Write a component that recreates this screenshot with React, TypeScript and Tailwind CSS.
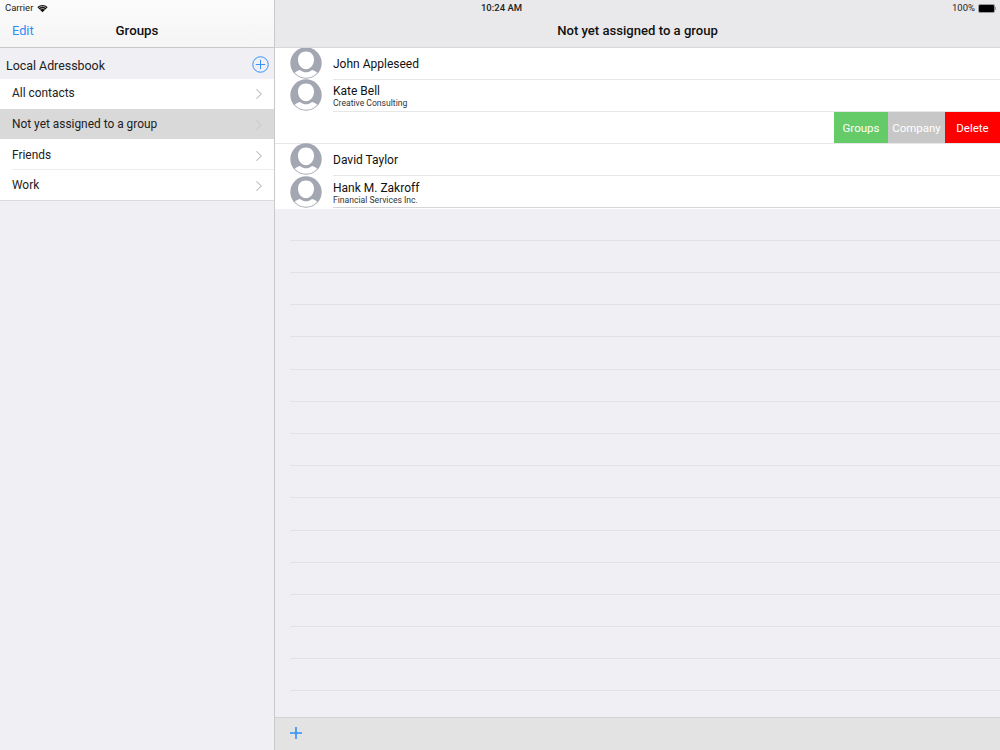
import { ChevronRight } from 'lucide-react';

const GROUPS = [
  { name: 'All contacts', h: 'h-[30px] pt-px', sep: false },
  { name: 'Not yet assigned to a group', h: 'h-[30.5px] pt-[2px]', selected: true },
  { name: 'Friends', h: 'h-[30.5px] pt-[3px]', sep: true },
  { name: 'Work', h: 'h-[30.5px] pt-[3px]' },
];

const Avatar = () => (
  <svg viewBox="0 0 32 32" className="-mt-[2px] h-8 w-8 shrink-0">
    <defs>
      <clipPath id="avatar-clip">
        <circle cx="16" cy="16" r="14.7" />
      </clipPath>
    </defs>
    <circle cx="16" cy="16" r="15.7" fill="#a3a7b2" />
    <g clipPath="url(#avatar-clip)">
      <path d="M2 32c0-4.500 3-7.500 8-9 2 1.600 4 2.300 6 2.300s4-.7 6-2.300c5 1.500 8 4.500 8 9z" fill="#fff" />
      <path d="M16 4.500c4.800 0 8 3.400 8 8.100 0 5.400-3.700 9.700-8 9.700s-8-4.300-8-9.700c0-4.700 3.200-8.100 8-8.100z" fill="#fff" />
    </g>
  </svg>
);

const ContactRow = ({ name, company, last }: { name: string; company?: string; last?: boolean }) => (
  <div className="flex h-[32.13px] items-center bg-white pl-[15px]">
    <Avatar />
    <div
      className={`ml-[11px] -mt-px flex h-full flex-1 flex-col justify-center border-b ${
        company ? 'pt-[2px]' : 'pt-px'
      } ${last ? 'border-[#d6d6da]' : 'border-[#e6e6e8]'}`}
    >
      <span className="text-[12px] leading-[14px] text-[#111]">{name}</span>
      {company && <span className="text-[8.6px] leading-[10px] text-[#333]">{company}</span>}
    </div>
  </div>
);

const App = () => {
  return (
    <div className="relative flex h-[750px] w-[1000px] overflow-hidden bg-[#efeff4] font-['Roboto','Liberation_Sans',sans-serif]">
      {/* status bar */}
      <div className="absolute inset-x-0 top-0 flex h-4 items-center justify-between pl-[5px] pr-[4px] text-[9.5px] text-[#222]">
        <div className="flex w-40 items-center gap-[4px]">
          <span>Carrier</span>
          <svg viewBox="0 0 12 9" className="h-[9px] w-[11px]">
            <path d="M6 8.600 0.400 3.100C3.600 0 8.400 0 11.600 3.100z" fill="#111" />
            <path d="M2 3.600C4.400 1.800 7.600 1.800 10 3.600" stroke="#f7f7f8" strokeWidth="0.7" fill="none" />
            <path d="M3.600 5.300C5 4.300 7 4.300 8.400 5.300" stroke="#f7f7f8" strokeWidth="0.7" fill="none" />
          </svg>
        </div>
        <span className="ml-[2px] font-medium">10:24 AM</span>
        <div className="flex w-40 items-center justify-end gap-[3px]">
          <span>100%</span>
          <div className="flex items-center">
            <div className="h-[9px] w-[17px] rounded-[2px] border border-[#999] bg-black" />
            <div className="h-[3px] w-[1px] bg-[#999]" />
          </div>
        </div>
      </div>

      {/* groups column */}
      <aside className="flex w-[275px] shrink-0 flex-col border-r border-[#c9c9cc] bg-[#efeff4]">
        <header className="flex h-[48px] shrink-0 items-end justify-between border-b border-[#c8c8cc] bg-gradient-to-b from-[#fbfbfb] to-[#f5f5f6] px-3 pb-[6px]">
          <span className="w-16 text-[12.8px] leading-[20px] text-[#2f8dfa]">Edit</span>
          <span className="text-[13.3px] font-medium leading-[20px] text-[#111]">Groups</span>
          <span className="w-16" />
        </header>
        <div className="flex h-[30.5px] shrink-0 items-center justify-between pl-[6px] pr-[5px] pt-[3px]">
          <span className="mt-[3px] text-[12.4px] text-[#222]">Local Adressbook</span>
          <svg viewBox="0 0 18 18" className="h-[17px] w-[17px]" fill="none" stroke="#2f8dfa" strokeWidth="1">
            <circle cx="9" cy="9" r="8.2" />
            <path d="M9 4v10M4 9h10" />
          </svg>
        </div>
        <ul className="border-b border-[#dcdcdf] bg-white">
          {GROUPS.map(g => (
            <li
              key={g.name}
              className={`relative flex items-center justify-between pl-3 pr-[6px] ${g.h} ${
                g.selected ? 'bg-[#d9d9d9]' : ''
              }`}
            >
              <span className="text-[11.9px] text-[#222]">{g.name}</span>
              <ChevronRight
                size={18}
                strokeWidth={1.4}
                className={g.selected ? 'text-[#c8c8cb]' : 'text-[#b4b4b8]'}
              />
              {g.sep && <span className="absolute bottom-0 left-3 right-0 h-px bg-[#ececee]" />}
            </li>
          ))}
        </ul>
      </aside>

      {/* contacts column */}
      <main className="flex min-w-0 flex-1 flex-col">
        <header className="flex h-[48px] shrink-0 items-end justify-center border-b border-[#d8d8da] bg-[#e9e9eb] pb-[6px]">
          <span className="text-[13.1px] font-medium leading-[20px] text-[#111]">Not yet assigned to a group</span>
        </header>
        <div className="flex-1 overflow-hidden">
          <ContactRow name="John Appleseed" />
          <ContactRow name="Kate Bell" company="Creative Consulting" />
          <div className="flex h-[32.13px] justify-end border-b border-[#e6e6e8] bg-white text-[11.5px] text-white">
            <span className="flex w-[54px] items-center justify-center bg-[#65cb68] pt-[2px]">Groups</span>
            <span className="flex w-[57px] items-center justify-center bg-[#c7c7c7] pt-[2px]">Company</span>
            <span className="flex w-[55px] items-center justify-center bg-[#fe0000] pt-[2px]">Delete</span>
          </div>
          <ContactRow name="David Taylor" />
          <ContactRow name="Hank M. Zakroff" company="Financial Services Inc." last />
          <div>
            {Array.from({ length: 15 }, (_, i) => (
              <div key={i} className="ml-[15px] h-[32.2px] border-b border-[#e2e2e6]" />
            ))}
          </div>
        </div>
        <footer className="flex h-[33px] shrink-0 items-center border-t border-[#d2d2d4] bg-[#e3e3e3] pb-[2px] pl-[14px]">
          <svg viewBox="0 0 14 14" className="h-[14px] w-[14px]" stroke="#2e8ffb" strokeWidth="1.6">
            <path d="M7 1v12M1 7h12" />
          </svg>
        </footer>
      </main>
    </div>
  );
};

export default App;
